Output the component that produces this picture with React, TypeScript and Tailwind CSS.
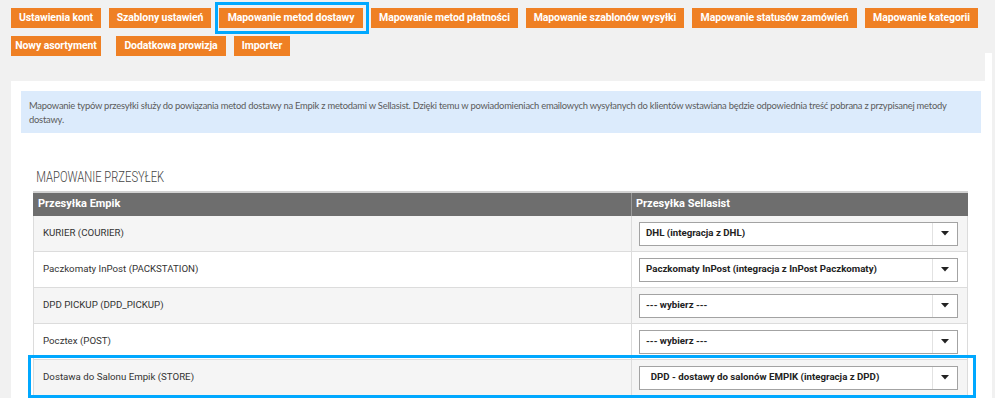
import React from 'react';

const ORANGE = 'bg-[#ef8024]';

interface NavButton {
  label: string;
  width: string;
  active?: boolean;
}

const rowOne: NavButton[] = [
  { label: 'Ustawienia kont', width: 'w-[90px]' },
  { label: 'Szablony ustawień', width: 'w-[102px]' },
  { label: 'Mapowanie metod dostawy', width: 'w-[144px]', active: true },
  { label: 'Mapowanie metod płatności', width: 'w-[147px]' },
  { label: 'Mapowanie szablonów wysyłki', width: 'w-[158px]' },
  { label: 'Mapowanie statusów zamówień', width: 'w-[165px]' },
  { label: 'Mapowanie kategorii', width: 'w-[113px]' },
];

const rows = [
  { empik: 'KURIER (COURIER)', sellasist: 'DHL (integracja z DHL)' },
  { empik: 'Paczkomaty InPost (PACKSTATION)', sellasist: 'Paczkomaty InPost (integracja z InPost Paczkomaty)' },
  { empik: 'DPD PICKUP (DPD_PICKUP)', sellasist: '--- wybierz ---' },
  { empik: 'Pocztex (POST)', sellasist: '--- wybierz ---' },
  { empik: 'Dostawa do Salonu Empik (STORE)', sellasist: '  DPD - dostawy do salonów EMPIK (integracja z DPD)', highlight: true },
];

const TabButton: React.FC<NavButton & { className?: string }> = ({ label, width, active, className }) => (
  <div className={`relative shrink-0 ${className ?? ''}`}>
    <button
      type="button"
      className={`${width} h-[20px] ${ORANGE} text-white text-[10.5px] font-bold whitespace-nowrap flex items-center justify-center tracking-[-0.1px]`}
    >
      {label}
    </button>
    {active && (
      <div className="absolute -left-[4px] -right-[6px] -top-[6px] -bottom-[6px] border-[3px] border-[#00a8ff] pointer-events-none" />
    )}
  </div>
);

const SelectBox: React.FC<{ value: string }> = ({ value }) => (
  <div className="w-[319px] h-[24px] border border-[#a3a3a3] bg-white flex items-stretch">
    <span className="flex-1 pl-[6px] flex items-center text-[9.7px] font-bold text-[#222] whitespace-pre">{value}</span>
    <span className="w-[25px] border-l border-[#e2e2e2] flex items-center justify-center">
      <svg width="8" height="5" viewBox="0 0 8 5">
        <path d="M0 0 H8 L4 4.5 Z" fill="#222" />
      </svg>
    </span>
  </div>
);

export default function App() {
  return (
    <div className="w-full h-[398px] overflow-hidden bg-[#f1f1f1] flex font-['Roboto',sans-serif]">
      <div className="flex-1 min-w-0 pl-[11px] pt-[8px] flex flex-col">
        <div className="flex gap-[8px]">
          {rowOne.map((b) => (
            <TabButton key={b.label} {...b} />
          ))}
        </div>
        <div className="flex mt-[8px]">
          <TabButton label="Nowy asortyment" width="w-[90px]" />
          <TabButton label="Dodatkowa prowizja" width="w-[110px]" className="ml-[15px]" />
          <TabButton label="Importer" width="w-[56px]" className="ml-[8px]" />
        </div>

        <div className="mt-[25px] flex-1 min-w-0 bg-white pt-[10px] pl-[10px] pr-[4px]">
          <div className="bg-[#dcebfc] h-[42px] px-[8px] pt-[8px] text-[9.4px] leading-[14px] tracking-[-0.23px] text-[#5b5b5b] font-['Lato',sans-serif] overflow-hidden">
            <span className="whitespace-nowrap">
              Mapowanie typów przesyłki służy do powiązania metod dostawy na Empik z metodami w Sellasist. Dzięki temu w powiadomieniach emailowych wysyłanych do klientów wstawiana będzie odpowiednia treść pobrana z przypisanej metody
            </span>
            <br />
            dostawy.
          </div>

          <div className="ml-[12px] mr-[13px] mt-[36px]">
            <h3 className="text-[14px] font-light text-[#444] leading-[16px] pl-[4px] mb-[6px] whitespace-nowrap origin-left scale-x-[0.8]">
              MAPOWANIE PRZESYŁEK
            </h3>
            <div className="border-t-2 border-[#d2d2d2]">
              <div className="flex h-[23px] bg-[#6e6e6e] text-white text-[11px] font-bold">
                <div className="w-[598px] pl-[5px] flex items-center">Przesyłka Empik</div>
                <div className="flex-1 border-l border-[#9a9a9a] pl-[4px] flex items-center">Przesyłka Sellasist</div>
              </div>
              {rows.map((r, i) => (
                <div
                  key={r.empik}
                  className={`relative flex h-[36px] border-b border-[#dcdcdc] border-l border-r ${i % 2 === 0 ? 'bg-[#f5f5f5]' : 'bg-white'}`}
                >
                  <div className="w-[597px] pl-[9px] flex items-center text-[9.7px] text-[#333]">{r.empik}</div>
                  <div className="flex-1 border-l border-[#dcdcdc] pl-[7px] flex items-center">
                    <SelectBox value={r.sellasist} />
                  </div>
                  {r.highlight && (
                    <div className="absolute -left-[6px] -right-[9px] -top-[5px] -bottom-[3px] border-[3px] border-[#00a8ff] pointer-events-none" />
                  )}
                </div>
              ))}
            </div>
          </div>
        </div>
      </div>
      <div className="w-[7px] mt-[53px] bg-white" />
      <div className="w-[3px]" />
    </div>
  );
}
